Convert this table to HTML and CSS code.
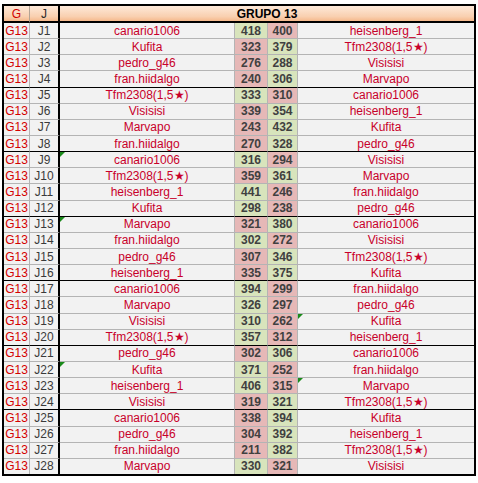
FILE: index.html
```html
<!DOCTYPE html>
<html lang="es">
<head>
<meta charset="utf-8">
<title>GRUPO 13</title>
<link rel="stylesheet" href="styles.css">
</head>
<body>
<div class="wrap">
<table class="sheet">
<colgroup>
<col class="c-g"><col class="c-j"><col class="c-n1"><col class="c-s1"><col class="c-s2"><col class="c-n2">
</colgroup>
<thead>
<tr><th class="g">G</th><th class="j">J</th><th class="grp" colspan="4">GRUPO 13</th></tr>
</thead>
<tbody>
<tr><td class="g">G13</td><td class="j">J1</td><td class="n">canario1006</td><td class="s w">418</td><td class="s l">400</td><td class="n">heisenberg_1</td></tr>
<tr><td class="g">G13</td><td class="j">J2</td><td class="n">Kufita</td><td class="s l">323</td><td class="s w">379</td><td class="n">Tfm2308(1,5★)</td></tr>
<tr><td class="g">G13</td><td class="j">J3</td><td class="n">pedro_g46</td><td class="s l">276</td><td class="s w">288</td><td class="n">Visisisi</td></tr>
<tr class="end"><td class="g">G13</td><td class="j">J4</td><td class="n">fran.hiidalgo</td><td class="s l">240</td><td class="s w">306</td><td class="n">Marvapo</td></tr>
<tr><td class="g">G13</td><td class="j">J5</td><td class="n">Tfm2308(1,5★)</td><td class="s w">333</td><td class="s l">310</td><td class="n">canario1006</td></tr>
<tr><td class="g">G13</td><td class="j">J6</td><td class="n">Visisisi</td><td class="s l">339</td><td class="s w">354</td><td class="n">heisenberg_1</td></tr>
<tr><td class="g">G13</td><td class="j">J7</td><td class="n">Marvapo</td><td class="s l">243</td><td class="s w">432</td><td class="n">Kufita</td></tr>
<tr class="end"><td class="g">G13</td><td class="j">J8</td><td class="n">fran.hiidalgo</td><td class="s l">270</td><td class="s w">328</td><td class="n">pedro_g46</td></tr>
<tr><td class="g">G13</td><td class="j">J9</td><td class="n tri">canario1006</td><td class="s w">316</td><td class="s l">294</td><td class="n">Visisisi</td></tr>
<tr><td class="g">G13</td><td class="j">J10</td><td class="n">Tfm2308(1,5★)</td><td class="s l">359</td><td class="s w">361</td><td class="n">Marvapo</td></tr>
<tr><td class="g">G13</td><td class="j">J11</td><td class="n">heisenberg_1</td><td class="s w">441</td><td class="s l">246</td><td class="n">fran.hiidalgo</td></tr>
<tr class="end"><td class="g">G13</td><td class="j">J12</td><td class="n">Kufita</td><td class="s w">298</td><td class="s l">238</td><td class="n">pedro_g46</td></tr>
<tr><td class="g">G13</td><td class="j">J13</td><td class="n tri">Marvapo</td><td class="s l">321</td><td class="s w">380</td><td class="n">canario1006</td></tr>
<tr><td class="g">G13</td><td class="j">J14</td><td class="n">fran.hiidalgo</td><td class="s w">302</td><td class="s l">272</td><td class="n">Visisisi</td></tr>
<tr><td class="g">G13</td><td class="j">J15</td><td class="n">pedro_g46</td><td class="s l">307</td><td class="s w">346</td><td class="n">Tfm2308(1,5★)</td></tr>
<tr class="end"><td class="g">G13</td><td class="j">J16</td><td class="n">heisenberg_1</td><td class="s l">335</td><td class="s w">375</td><td class="n">Kufita</td></tr>
<tr><td class="g">G13</td><td class="j">J17</td><td class="n">canario1006</td><td class="s w">394</td><td class="s l">299</td><td class="n">fran.hiidalgo</td></tr>
<tr><td class="g">G13</td><td class="j">J18</td><td class="n">Marvapo</td><td class="s w">326</td><td class="s l">297</td><td class="n">pedro_g46</td></tr>
<tr><td class="g">G13</td><td class="j">J19</td><td class="n">Visisisi</td><td class="s w">310</td><td class="s l">262</td><td class="n tri">Kufita</td></tr>
<tr class="end"><td class="g">G13</td><td class="j">J20</td><td class="n">Tfm2308(1,5★)</td><td class="s w">357</td><td class="s l">312</td><td class="n">heisenberg_1</td></tr>
<tr><td class="g">G13</td><td class="j">J21</td><td class="n">pedro_g46</td><td class="s l">302</td><td class="s w">306</td><td class="n">canario1006</td></tr>
<tr><td class="g">G13</td><td class="j">J22</td><td class="n tri">Kufita</td><td class="s w">371</td><td class="s l">252</td><td class="n">fran.hiidalgo</td></tr>
<tr><td class="g">G13</td><td class="j">J23</td><td class="n">heisenberg_1</td><td class="s w">406</td><td class="s l">315</td><td class="n tri">Marvapo</td></tr>
<tr class="end"><td class="g">G13</td><td class="j">J24</td><td class="n">Visisisi</td><td class="s l">319</td><td class="s w">321</td><td class="n">Tfm2308(1,5★)</td></tr>
<tr><td class="g">G13</td><td class="j">J25</td><td class="n">canario1006</td><td class="s l">338</td><td class="s w">394</td><td class="n">Kufita</td></tr>
<tr><td class="g">G13</td><td class="j">J26</td><td class="n">pedro_g46</td><td class="s l">304</td><td class="s w">392</td><td class="n">heisenberg_1</td></tr>
<tr><td class="g">G13</td><td class="j">J27</td><td class="n">fran.hiidalgo</td><td class="s l">211</td><td class="s w">382</td><td class="n">Tfm2308(1,5★)</td></tr>
<tr class="last"><td class="g">G13</td><td class="j">J28</td><td class="n">Marvapo</td><td class="s w">330</td><td class="s l">321</td><td class="n">Visisisi</td></tr>
</tbody>
</table>
</div>
</body>
</html>
```

FILE: styles.css
```css
html, body {
  margin: 0;
  padding: 0;
  background: #ffffff;
}

.wrap {
  padding: 4px 0 0 2px;
}

.sheet {
  border-collapse: separate;
  border-spacing: 0;
  table-layout: fixed;
  width: 474px;
  border: 2px solid #000000;
  font-family: "Liberation Sans", Arial, sans-serif;
  font-size: 12px;
}

.c-g { width: 26px; }
.c-j { width: 30px; }
.c-n1 { width: 175px; }
.c-s1 { width: 33px; }
.c-s2 { width: 30px; }
.c-n2 { width: 176px; }

.sheet th,
.sheet td {
  box-sizing: border-box;
  padding: 0;
  text-align: center;
  vertical-align: middle;
  white-space: nowrap;
  overflow: hidden;
}

.sheet th {
  height: 17px;
  line-height: 14px;
  font-weight: normal;
  background: linear-gradient(to bottom, #fde9d9 0%, #f9d0b0 70%, #f5b98c 100%);
  border-bottom: 2px solid #000000;
}

.sheet th.g {
  color: #d00000;
  border-right: 1px solid #b3a394;
}

.sheet th.j {
  color: #2a2a2a;
  border-right: 2px solid #000000;
}

.sheet th.grp {
  font-weight: bold;
  color: #000000;
}

.sheet td {
  height: 16.15px;
  line-height: 14px;
  background: #f2f2f2;
  border-bottom: 1px solid #b4b4b4;
  border-right: 1px solid #b4b4b4;
}

.sheet tr.end td {
  border-bottom-color: #000000;
}

.sheet tr.last td {
  border-bottom: 0;
  height: 15.15px;
}

.sheet td.g {
  color: #d40000;
}

.sheet td.j {
  color: #3a3a3a;
  border-right: 2px solid #000000;
}

.sheet td.n {
  color: #c8002a;
}

.sheet td.n:last-child {
  border-right: 0;
}

.sheet td.s {
  font-weight: bold;
  color: #404040;
}

.sheet td.w {
  background: #d8e4bc;
}

.sheet td.l {
  background: #e6b8b7;
}

.sheet td.tri {
  position: relative;
}

.sheet td.tri::before {
  content: "";
  position: absolute;
  left: 0;
  top: 0;
  width: 0;
  height: 0;
  border-top: 5px solid #1a8a1a;
  border-right: 5px solid transparent;
}
```
